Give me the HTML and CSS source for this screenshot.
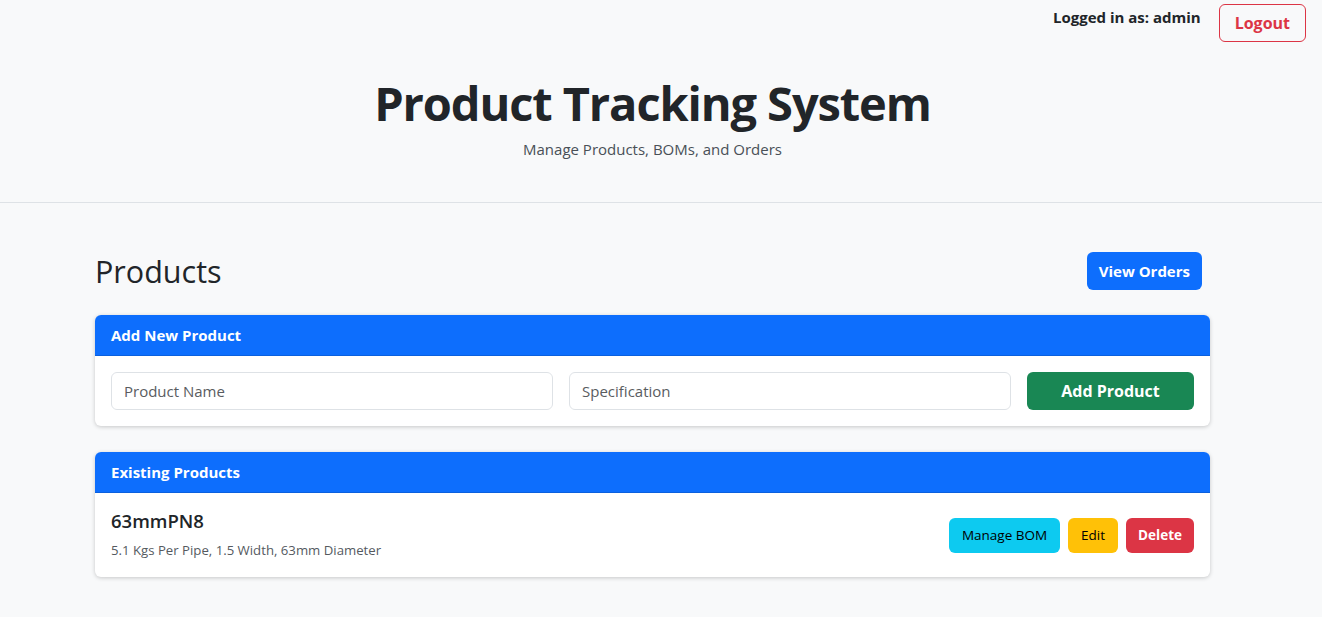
FILE: index.html
```html
<!DOCTYPE html>
<html lang="en">
<head>
<meta charset="utf-8">
<title>Product Tracking System</title>
<link rel="stylesheet" href="styles.css">
</head>
<body>
<div class="page">
  <div class="userbar">
    <span class="user-label">Logged in as: admin</span>
    <button class="btn btn-outline-danger">Logout</button>
  </div>
  <header class="site-header">
    <h1 class="site-title">Product Tracking System</h1>
    <p class="site-subtitle">Manage Products, BOMs, and Orders</p>
  </header>
  <div class="content">
    <main class="container">
      <div class="section-head">
        <h2 class="section-title">Products</h2>
        <button class="btn btn-primary btn-bold">View Orders</button>
      </div>
      <section class="card">
        <div class="card-header">Add New Product</div>
        <div class="card-body form-row">
          <input class="form-control" type="text" placeholder="Product Name">
          <input class="form-control" type="text" placeholder="Specification">
          <button class="btn btn-success btn-bold">Add Product</button>
        </div>
      </section>
      <section class="card">
        <div class="card-header">Existing Products</div>
        <div class="product-item">
          <div class="product-info">
            <h5 class="product-name">63mmPN8</h5>
            <small class="product-spec">5.1 Kgs Per Pipe, 1.5 Width, 63mm Diameter</small>
          </div>
          <div class="product-actions">
            <button class="btn btn-sm btn-info">Manage BOM</button>
            <button class="btn btn-sm btn-warning">Edit</button>
            <button class="btn btn-sm btn-danger">Delete</button>
          </div>
        </div>
      </section>
    </main>
  </div>
</div>
</body>
</html>
```

FILE: styles.css
```css
* { box-sizing: border-box; }
html, body {
  margin: 0;
  padding: 0;
  background: #f8f9fa;
}
body {
  font-family: "Open Sans", "Noto Sans", "Liberation Sans", sans-serif;
  color: #212529;
  font-size: 16px;
  line-height: 1.5;
}
.page {
  min-height: 617px;
}
.userbar {
  position: absolute;
  top: 4px;
  right: 16px;
  display: flex;
  align-items: flex-start;
  gap: 18px;
}
.user-label {
  font-weight: 700;
  font-size: 15px;
  margin-top: 2px;
}
.btn {
  font-family: inherit;
  font-size: 16px;
  line-height: 24px;
  padding: 6px 16px;
  border: 1px solid transparent;
  border-radius: 6px;
  cursor: pointer;
}
.btn-bold { font-weight: 700; }
.btn-outline-danger {
  background: transparent;
  color: #dc3545;
  border-color: #dc3545;
  font-weight: 700;
  height: 38px;
  padding: 6px 15px;
}
.site-header {
  padding: 74px 17px 0 0;
  height: 203px;
  border-bottom: 1px solid #dee2e6;
}
.site-title {
  margin: 0;
  text-align: center;
  font-size: 47px;
  line-height: 58px;
  font-weight: 700;
  letter-spacing: -1.1px;
}
.site-subtitle {
  margin: 6px 0 0;
  text-align: center;
  font-size: 15px;
  color: #495057;
}
.content {
  padding-right: 17px;
}
.container {
  width: 1115px;
  margin: 0 auto;
  padding-top: 48px;
}
.section-head {
  display: flex;
  justify-content: space-between;
  align-items: center;
  padding-right: 8px;
  margin-bottom: 24px;
}
.section-title {
  margin: 0;
  font-size: 30.5px;
  font-weight: 500;
  line-height: 40px;
}
.btn-primary {
  background: #0d6efd;
  color: #fff;
  height: 38px;
  padding: 6px 11px;
  font-size: 15px;
}
.card {
  background: #fff;
  border-radius: 6px;
  box-shadow: 0 1px 4px rgba(0,0,0,0.2);
  margin-bottom: 26px;
  overflow: hidden;
}
.card-header {
  background: #0d6efd;
  color: #fff;
  font-weight: 700;
  font-size: 15px;
  padding: 8px 16px;
  line-height: 24px;
  border-bottom: 1px solid rgba(0,0,0,0.12);
}
.card-body { padding: 16px; }
.form-row {
  display: grid;
  grid-template-columns: 1fr 1fr 167px;
  gap: 16px;
}
.form-control {
  font-family: inherit;
  font-size: 15px;
  height: 38px;
  padding: 6px 12px;
  border: 1px solid #dee2e6;
  border-radius: 6px;
  color: #212529;
  background: #fff;
}
.form-control::placeholder { color: #595c5f; }
.btn-success {
  background: #198754;
  color: #fff;
  height: 38px;
}
.product-item {
  display: flex;
  justify-content: space-between;
  align-items: center;
  padding: 16px;
}
.product-name {
  margin: 0 0 4px;
  font-size: 18.5px;
  font-weight: 600;
  line-height: 24px;
}
.product-spec {
  font-size: 13.2px;
  color: #555a5f;
}
.product-actions {
  display: flex;
  gap: 8px;
}
.btn-sm {
  font-size: 13.5px;
  height: 35px;
  padding: 5px 12px;
  line-height: 22px;
  font-weight: 500;
}
.btn-info { background: #0dcaf0; color: #000; }
.btn-warning { background: #ffc107; color: #000; }
.btn-danger { background: #dc3545; color: #fff; font-weight: 700; padding: 5px 11px; }
```
